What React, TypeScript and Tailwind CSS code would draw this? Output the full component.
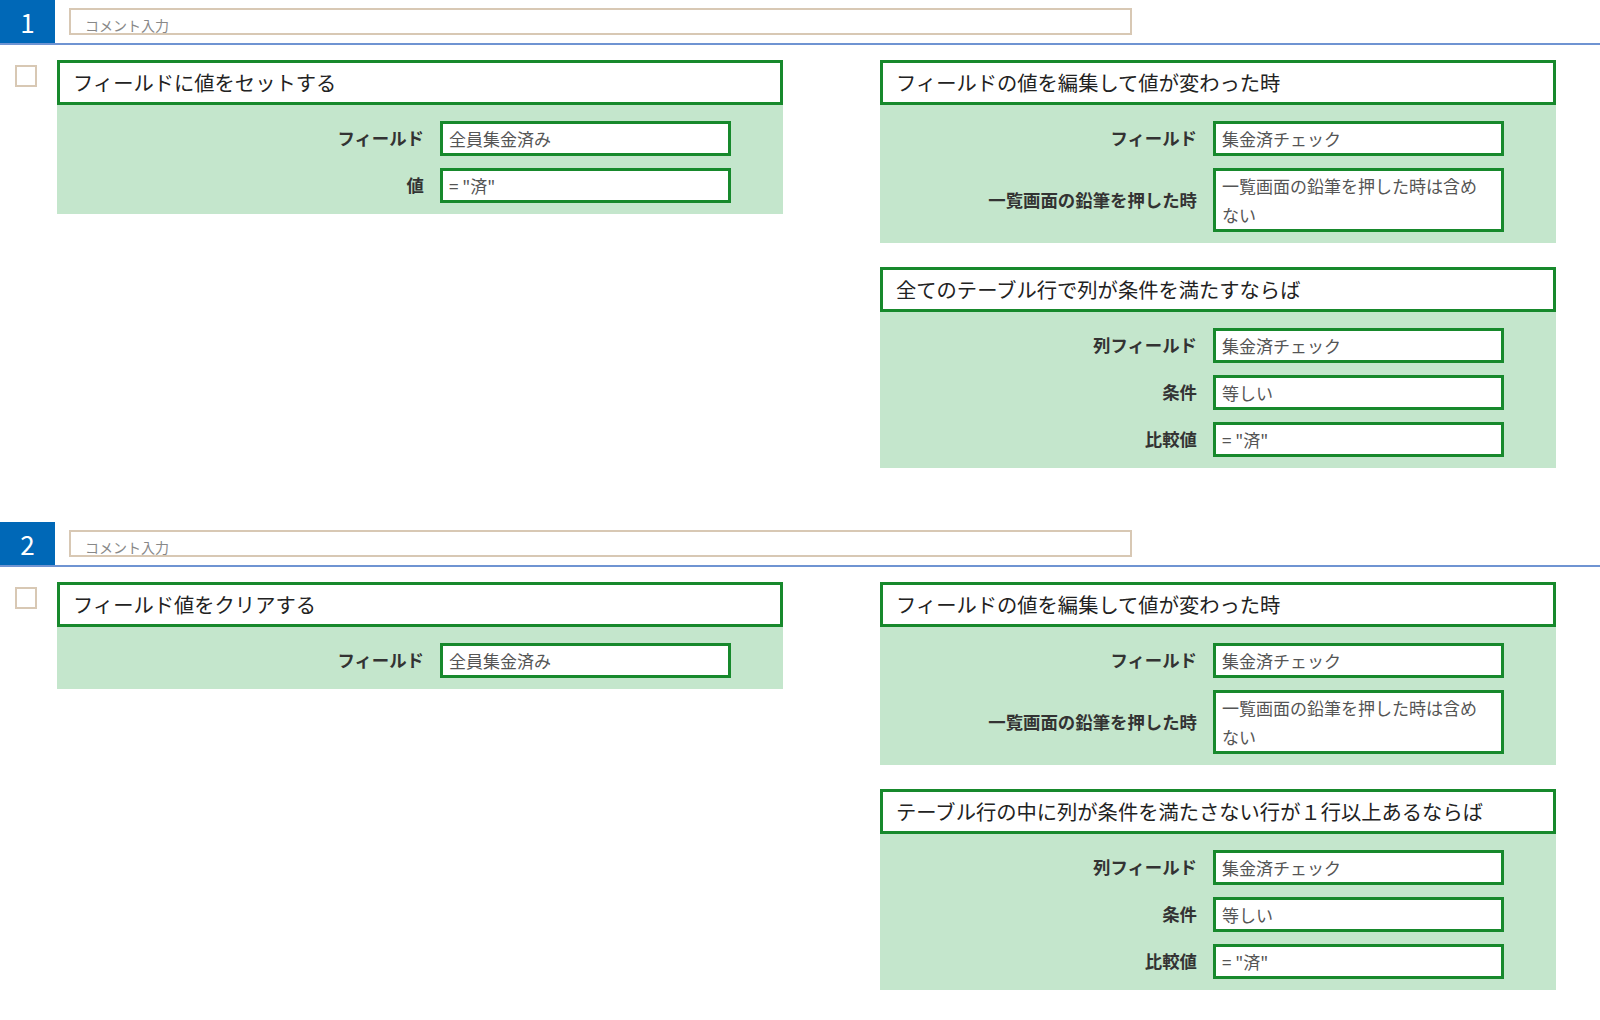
import React from "react";

type Row = { label: string; value: string; tall?: boolean };
type Card = { title: string; rows: Row[] };
type Block = { no: number; action: Card; triggers: Card[] };

const blocks: Block[] = [
  {
    no: 1,
    action: {
      title: "フィールドに値をセットする",
      rows: [
        { label: "フィールド", value: "全員集金済み" },
        { label: "値", value: '= "済"' }
      ]
    },
    triggers: [
      {
        title: "フィールドの値を編集して値が変わった時",
        rows: [
          { label: "フィールド", value: "集金済チェック" },
          { label: "一覧画面の鉛筆を押した時", value: "一覧画面の鉛筆を押した時は含めない", tall: true }
        ]
      },
      {
        title: "全てのテーブル行で列が条件を満たすならば",
        rows: [
          { label: "列フィールド", value: "集金済チェック" },
          { label: "条件", value: "等しい" },
          { label: "比較値", value: '= "済"' }
        ]
      }
    ]
  },
  {
    no: 2,
    action: {
      title: "フィールド値をクリアする",
      rows: [{ label: "フィールド", value: "全員集金済み" }]
    },
    triggers: [
      {
        title: "フィールドの値を編集して値が変わった時",
        rows: [
          { label: "フィールド", value: "集金済チェック" },
          { label: "一覧画面の鉛筆を押した時", value: "一覧画面の鉛筆を押した時は含めない", tall: true }
        ]
      },
      {
        title: "テーブル行の中に列が条件を満たさない行が１行以上あるならば",
        rows: [
          { label: "列フィールド", value: "集金済チェック" },
          { label: "条件", value: "等しい" },
          { label: "比較値", value: '= "済"' }
        ]
      }
    ]
  }
];

function RuleCard({ card, width, labelWidth }: { card: Card; width: string; labelWidth: string }) {
  return (
    <div className={width}>
      <div className="flex h-[45px] items-center border-[3px] border-[#17892c] bg-white pl-[13px] text-[20.3px] text-[#222]">
        {card.title}
      </div>
      <div className="flex flex-col gap-[12px] bg-[#c4e6cc] pt-[16px] pb-[11px]">
        {card.rows.map((row) => (
          <div key={row.label} className="flex items-center">
            <div className={`${labelWidth} shrink-0 text-right text-[17.4px] font-bold text-[#333]`}>
              {row.label}
            </div>
            <div
              className={
                row.tall
                  ? "ml-[16px] h-[64px] w-[291px] border-[3px] border-[#17892c] bg-white pl-[6px] pr-[20px] text-[17px] leading-[29px] text-[#555]"
                  : "ml-[16px] flex h-[35px] w-[291px] items-center border-[3px] border-[#17892c] bg-white px-[6px] text-[17px] text-[#555]"
              }
            >
              {row.value}
            </div>
          </div>
        ))}
      </div>
    </div>
  );
}

function Section({ block }: { block: Block }) {
  return (
    <div>
      <div className="flex h-[45px] border-b-2 border-[#6f94d2]">
        <div className="flex h-[43px] w-[55px] items-center justify-center bg-[#0068b7] text-[26px] text-white">
          {block.no}
        </div>
        <div className="ml-[14px] mt-[8px] flex h-[27px] w-[1063px] items-end border-2 border-[#d8c8b4] bg-white pl-[14px] text-[14px] leading-[16px] text-[#888]">
          コメント入力
        </div>
      </div>
      <div className="mt-[15px] flex items-start">
        <div className="ml-[15px] mt-[5px] h-[22px] w-[22px] shrink-0 border-2 border-[#d8c8b4] bg-white" />
        <div className="ml-[20px]">
          <RuleCard card={block.action} width="w-[726px]" labelWidth="w-[367px]" />
        </div>
        <div className="ml-[97px] flex flex-col gap-[24px]">
          {block.triggers.map((t) => (
            <RuleCard key={t.title} card={t} width="w-[676px]" labelWidth="w-[317px]" />
          ))}
        </div>
      </div>
    </div>
  );
}

export default function App() {
  return (
    <div
      className="min-h-[1020px] w-[1600px] bg-white"
      style={{ fontFamily: '"Noto Sans CJK JP", "Noto Sans", sans-serif' }}
    >
      <div className="flex flex-col gap-[54px]">
        {blocks.map((b) => (
          <Section key={b.no} block={b} />
        ))}
      </div>
    </div>
  );
}
